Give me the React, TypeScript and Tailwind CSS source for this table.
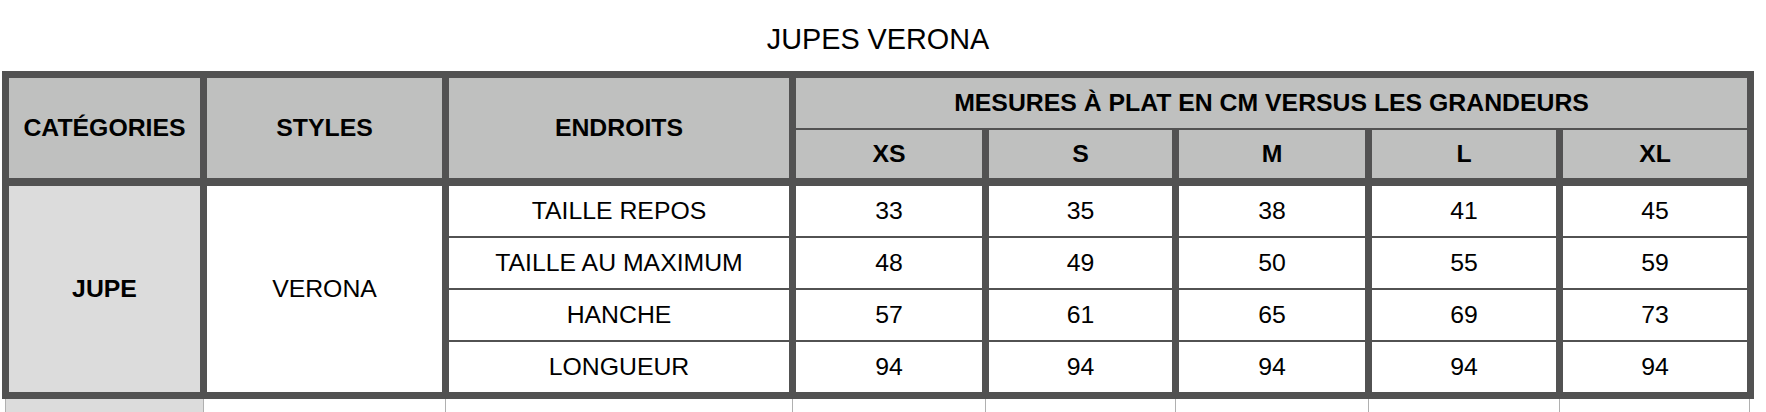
const sizes = ["XS", "S", "M", "L", "XL"]

const rows = [
  { label: "TAILLE REPOS", values: [33, 35, 38, 41, 45] },
  { label: "TAILLE AU MAXIMUM", values: [48, 49, 50, 55, 59] },
  { label: "HANCHE", values: [57, 61, 65, 69, 73] },
  { label: "LONGUEUR", values: [94, 94, 94, 94, 94] },
]

// widths of the partial row below, measured from border centre to border centre
const tailWidths = ["w-[198px]", "w-[242px]", "w-[347px]", "w-[193px]", "w-[190px]", "w-[193px]", "w-[191px]", "w-[191px]"]

export default function App() {
  return (
    <div className="w-[1766px] bg-white font-['Liberation_Sans',Arial,sans-serif] text-black">
      {/* Title */}
      <div className="pt-[23px] mb-[16px] ml-[2px] w-[1752px] text-center text-[28.8px] leading-[32px]">
        JUPES VERONA
      </div>

      {/* Size table */}
      <div className="ml-[2px] grid w-[1752px] grid-cols-[191px_235px_340px_186px_183px_186px_184px_184px] grid-rows-[50px_54px_50px_50px_50px_50px] gap-x-[7px] gap-y-[2px] bg-[#525252] p-[7px] text-[24.8px]">
        {/* Header */}
        <div className="row-span-2 mb-[6px] flex items-center justify-center bg-[#bfc0bf] font-bold">
          CATÉGORIES
        </div>
        <div className="row-span-2 mb-[6px] flex items-center justify-center bg-[#bfc0bf] font-bold">
          STYLES
        </div>
        <div className="row-span-2 mb-[6px] flex items-center justify-center bg-[#bfc0bf] font-bold">
          ENDROITS
        </div>
        <div className="col-span-5 flex items-center justify-center bg-[#bfc0bf] font-bold">
          MESURES À PLAT EN CM VERSUS LES GRANDEURS
        </div>
        {sizes.map((s) => (
          <div key={s} className="mb-[6px] flex items-center justify-center bg-[#bfc0bf] font-bold">
            {s}
          </div>
        ))}

        {/* Body */}
        <div className="col-start-1 row-start-3 row-span-4 flex items-center justify-center bg-[#dcdcdc] font-bold">
          JUPE
        </div>
        <div className="col-start-2 row-start-3 row-span-4 flex items-center justify-center bg-white">
          VERONA
        </div>
        {rows.map((r) => (
          <div key={r.label} className="contents">
            <div className="col-start-3 flex items-center justify-center bg-white">{r.label}</div>
            {r.values.map((v, i) => (
              <div key={i} className="flex items-center justify-center bg-white">
                {v}
              </div>
            ))}
          </div>
        ))}
      </div>

      {/* Start of the next table, cut by the window */}
      <div className="ml-[5px] flex h-[30px]">
        {tailWidths.map((w, i) => (
          <div
            key={i}
            className={`${w} border-l border-[#b0b0b0] ${i === 0 ? "bg-[#dcdcdc]" : ""} ${
              i === 1 ? "border-[#707070]" : ""
            } ${i === tailWidths.length - 1 ? "border-r" : ""}`}
          />
        ))}
      </div>
    </div>
  )
}
